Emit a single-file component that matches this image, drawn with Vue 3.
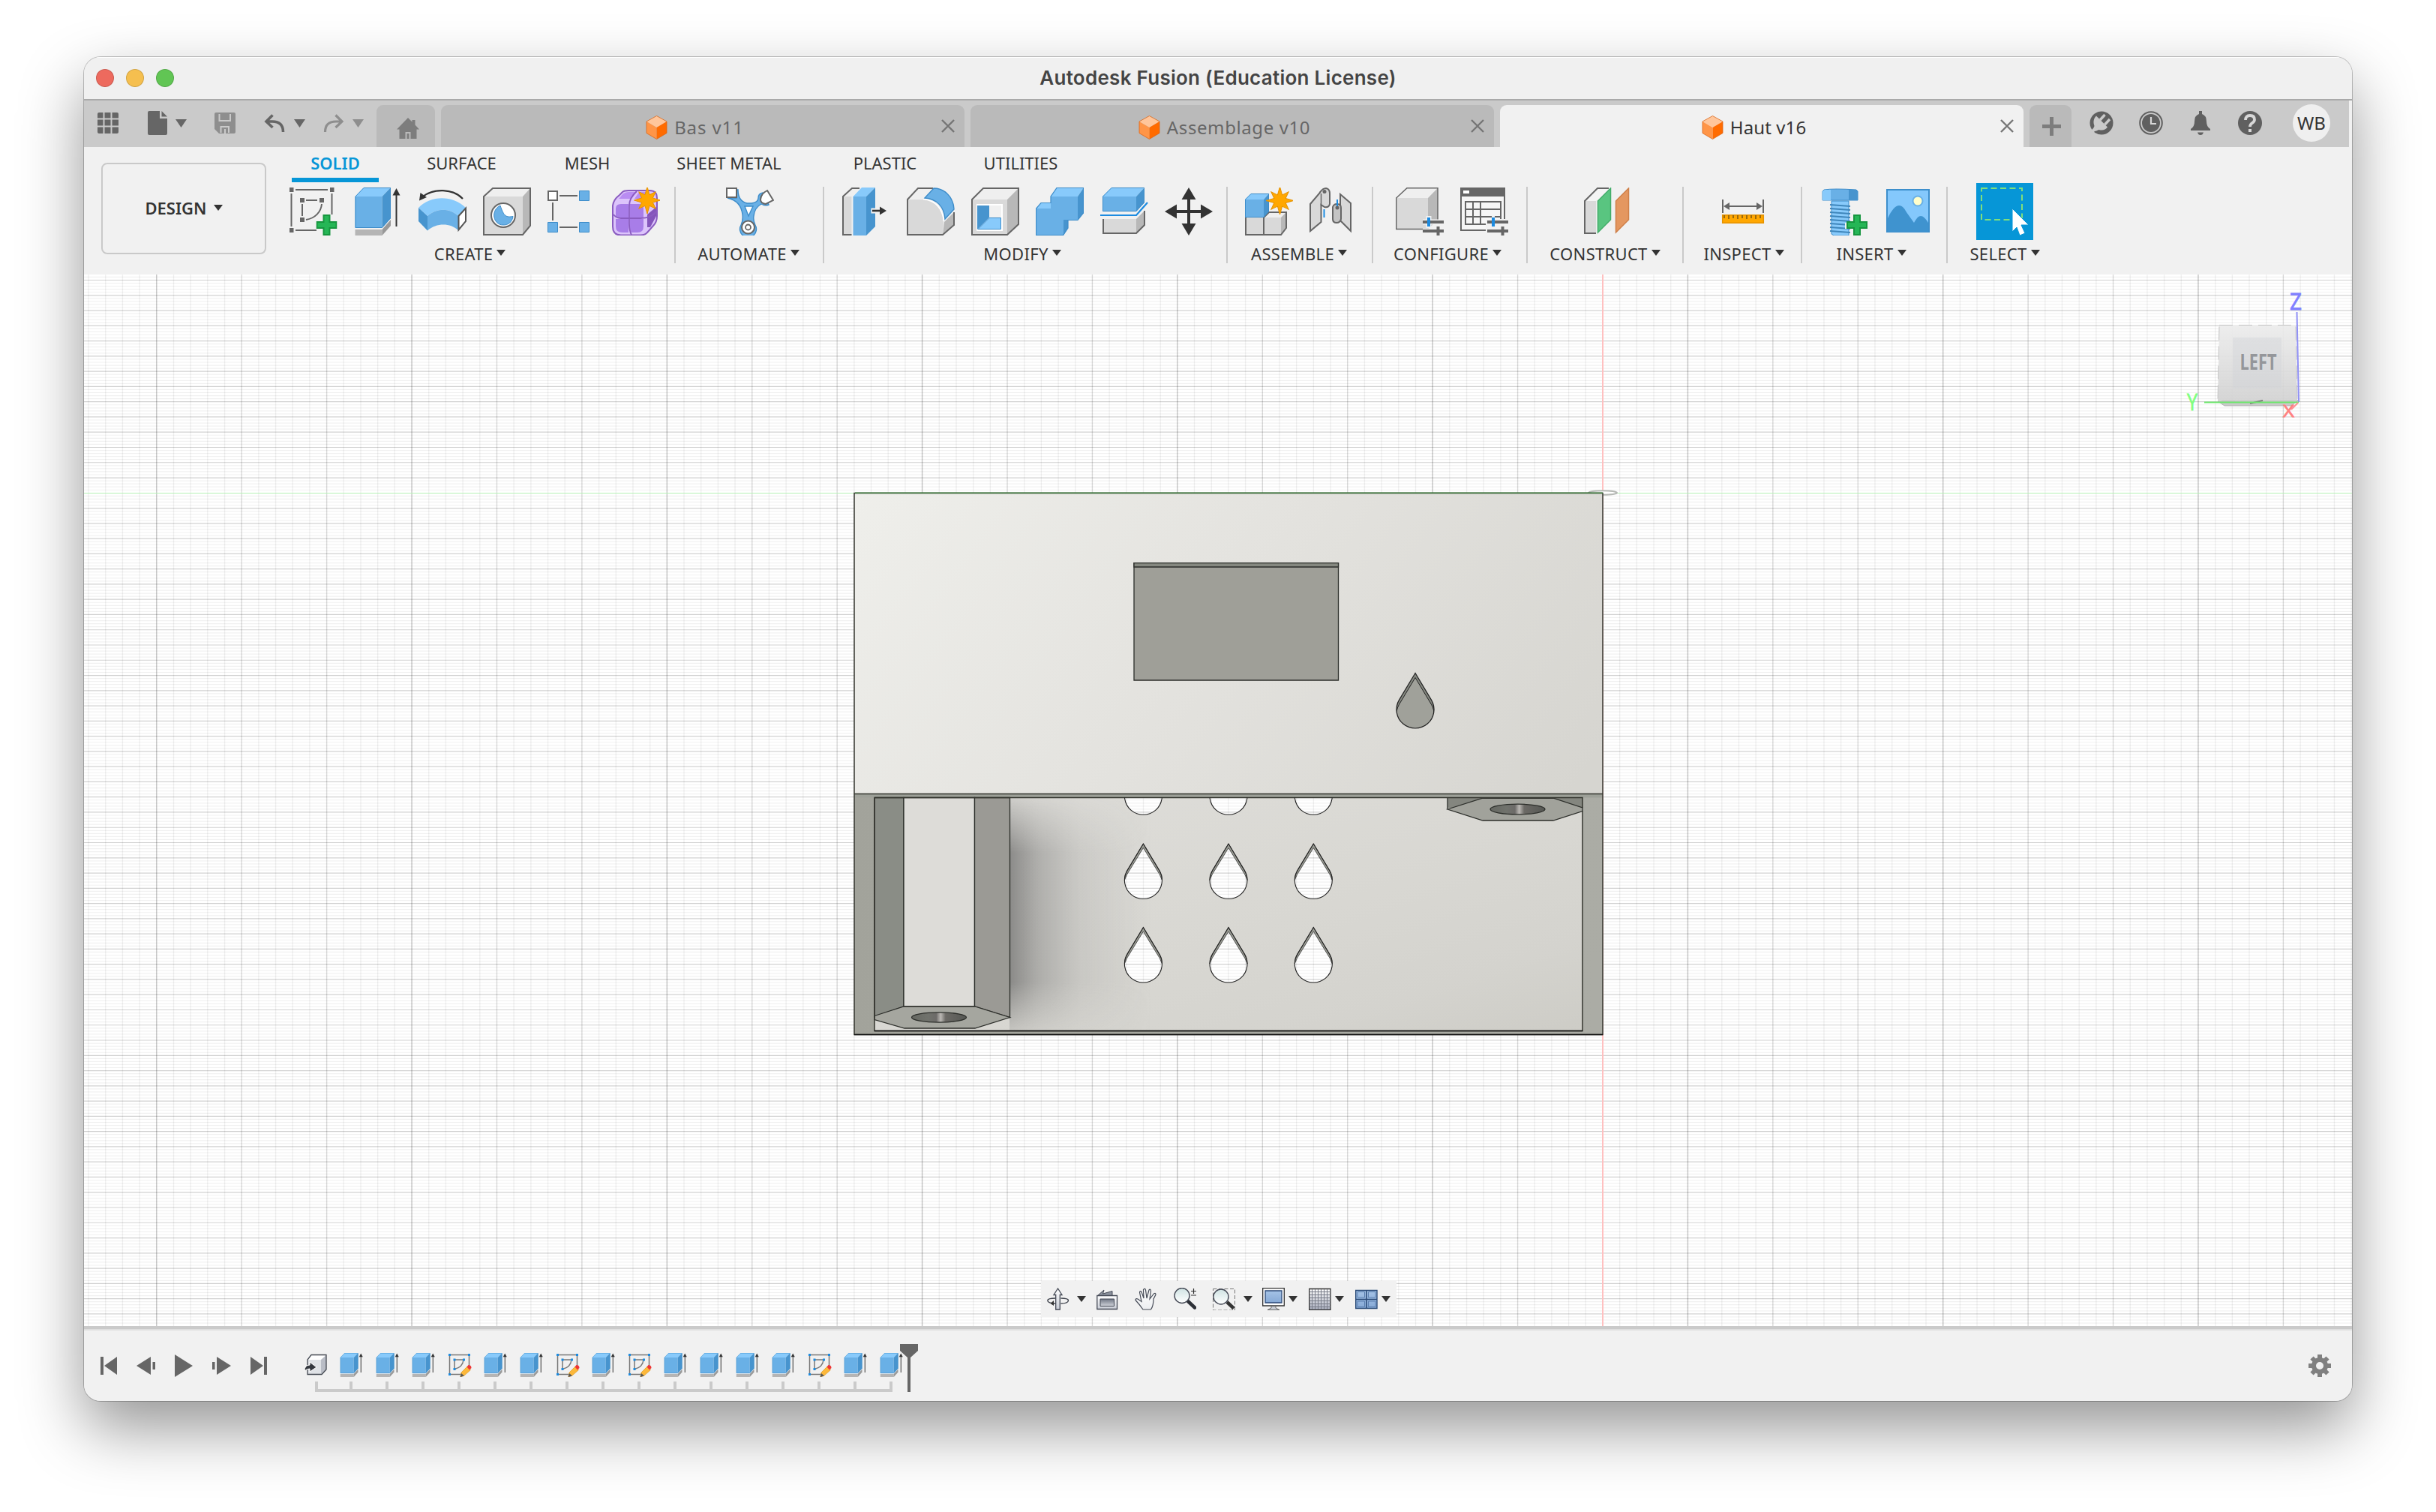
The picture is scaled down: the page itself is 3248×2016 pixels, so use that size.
<script setup>
const docTabs = [
  { name: 'Bas v11', active: false, spacing: '0.9px' },
  { name: 'Assemblage v10', active: false, spacing: '0.6px' },
  { name: 'Haut v16', active: true, spacing: '0.1px' },
]
const ribbonTabs = [
  { name: 'SOLID', width: 116, gap: 43, active: true },
  { name: 'SURFACE', width: 135, gap: 52 },
  { name: 'MESH', width: 96, gap: 49 },
  { name: 'SHEET METAL', width: 184, gap: 53 },
  { name: 'PLASTIC', width: 126, gap: 50 },
  { name: 'UTILITIES', width: 136, gap: 0 },
]
const groups = [
  { name: 'CREATE', icons: ['sketch', 'extrude', 'revolve', 'hole', 'pattern', 'form'], width: 531, shift: -8, nudge: -2 },
  { name: 'AUTOMATE', icons: ['automate'], width: 198, shift: -1, nudge: 1 },
  { name: 'MODIFY', icons: ['presspull', 'fillet', 'shell', 'combine', 'split', 'move'], width: 538, shift: -4, nudge: 3 },
  { name: 'ASSEMBLE', icons: ['component', 'joint'], width: 194, shift: -1, nudge: 2 },
  { name: 'CONFIGURE', icons: ['configure', 'table'], width: 206, shift: -3, nudge: 3 },
  { name: 'CONSTRUCT', icons: ['plane'], width: 208, shift: 0, nudge: 2 },
  { name: 'INSPECT', icons: ['measure'], width: 158, shift: 2, nudge: 1 },
  { name: 'INSERT', icons: ['bolt', 'image'], width: 194, shift: -4, nudge: 5 },
  { name: 'SELECT', icons: ['select'], width: 150, shift: 1, nudge: 1 },
]
const timeline = 'i,e,e,e,s,e,e,s,e,s,e,e,e,e,s,e,e'.split(',').map(
  (k) => ({ i: 'tl-import', e: 'extrude', s: 'tl-sketch' })[k],
)

// Canvas coordinates are relative to the viewport's top left corner (112, 366).
const W = 3024
const H = 1402
const ox = 2025
const oy = 291.3
const vx = []
const hy = []
for (let k = -89; k <= 44; k++) {
  const x = ox + k * 22.685
  const major = k % 5 === 0
  const strong = major && (((k / 5 + 2) % 3) + 3) % 3 === 0
  if (x > 0 && x < W && k !== 0) vx.push({ p: x, o: strong ? 0.23 : major ? 0.15 : 0.06 })
}
for (let k = -71; k <= 275; k++) {
  const y = oy + k * 4.054
  if (y > 0 && y < H && k !== 0) hy.push({ p: y, o: k % 5 === 0 ? 0.18 : 0.055 })
}
const dropXs = [1412.4, 1526, 1639.3]
const drops = dropXs.flatMap((x) => [695.3, 807.5, 919].map((y) => ({ x, y })))
const dropPath = 'M0,-48.5 L-21.4,-12.9 A25,25 0 1 0 21.4,-12.9 Z'
const navItems = [
  { id: 'nav-orbit', arrow: true, w: 30, g: 10, after: 14 },
  { id: 'nav-look', w: 30, after: 21 },
  { id: 'nav-hand', w: 30, after: 22 },
  { id: 'nav-zoom', w: 30, after: 22 },
  { id: 'nav-fit', arrow: true, w: 30, g: 11, after: 13 },
  { id: 'nav-display', arrow: true, w: 30, g: 5, after: 15 },
  { id: 'nav-grid', arrow: true, w: 30, g: 5, after: 15 },
  { id: 'nav-views', arrow: true, w: 30, g: 5, after: 0 },
]
</script>

<template>
  <div class="desktop">
    <svg class="defs" width="0" height="0">
      <defs>
        <linearGradient id="gLens" x1="0" y1="0" x2="0" y2="1"><stop offset="0" stop-color="#cfe3e3" /><stop offset="1" stop-color="#fff" /></linearGradient>
        <linearGradient id="gSteel" x1="0" y1="0" x2="0" y2="1"><stop offset="0" stop-color="#fff" /><stop offset="1" stop-color="#c9cdd6" /></linearGradient>
        <linearGradient id="gHand" x1="0" y1="0" x2="0" y2="1"><stop offset="0" stop-color="#fff" /><stop offset="1" stop-color="#eceef1" /></linearGradient>
        <linearGradient id="gGrid" x1="0" y1="0" x2="0" y2="1"><stop offset="0" stop-color="#fff" /><stop offset="1" stop-color="#a9aebd" /></linearGradient>
        <linearGradient id="gLook" x1="0" y1="0" x2="0" y2="1"><stop offset="0" stop-color="#6f7684" /><stop offset="1" stop-color="#d0d3da" /></linearGradient>
        <linearGradient id="gBlue" x1="0" y1="0" x2="0" y2="1"><stop offset="0" stop-color="#a5c3e6" /><stop offset="1" stop-color="#86a9d6" /></linearGradient>
      </defs>
      <symbol id="star" viewBox="-18 -18 36 36">
        <path d="M0-18 3-7.4 11.3-11.3 7.4-3 17.5 0 7.4 3 11.3 11.3 3 7.4 0 18-3 7.4-11.3 11.3-7.4 3-17.5 0-7.4-3-11.3-11.3-3-7.4Z" fill="#ffa700" stroke="#e59200" stroke-width="1" />
      </symbol>
      <symbol id="plus" viewBox="0 0 28 28">
        <path d="M10 1h8v9h9v8h-9v9h-8v-9H1v-8h9Z" fill="#26b656" stroke="#17963f" stroke-width="2" />
      </symbol>

      <symbol id="sketch" viewBox="0 0 64 64">
        <path d="M8 3h43M2.500 8v44M56.500 8v28M8 57h28M22 17h15M17 22v16M43 22c-1 11-9 19-21 21" fill="none" stroke="#666" stroke-width="2" />
        <path d="M0 0h5.500v6H0ZM54 0h5.500v6H54ZM0 54h5.500v6H0ZM14 14h6v6h-6ZM40 14h6v6h-6ZM14 40h6v6h-6Z" fill="#666" />
        <use href="#plus" x="35.500" y="36" width="28" height="28" />
      </symbol>
      <symbol id="extrude" viewBox="0 0 64 64">
        <path d="M1.500 12h36v42h-36Z" fill="#69b0e6" />
        <path d="M1.500 12 13 0h36L37.500 12Z" fill="#88cafb" />
        <path d="M37.500 12 49 0v41L37.500 54Z" fill="#4794ce" />
        <path d="M2 53.500V12L13 .5h35.500V41L37.500 53.500Z" fill="none" stroke="#3d8cc9" stroke-width="1" />
        <path d="M1.500 56h36v8h-36Z" fill="#b5b5b5" /><path d="M37.500 56 49 43v8L37.500 64Z" fill="#999" />
        <path d="M56.500 6v46" stroke="#333" stroke-width="2" /><path d="m56.500 1 5 9.500h-10Z" fill="#333" />
      </symbol>
      <symbol id="revolve" viewBox="0 0 64 64">
        <path d="M59 15C46 1 20 1 6 12" fill="none" stroke="#333" stroke-width="2.200" /><path d="M1 17.500 2.500 7 11 13Z" fill="#333" />
        <path d="M0 27C16 10 46 10 63 27L53 38C42 27 24 27 12 38Z" fill="#88cafb" />
        <path d="M0 27 12 38V57.500L0 45Z" fill="#4794ce" />
        <path d="M12 38C24 27 42 27 53 38V57C42 47 24 47 12 57.500Z" fill="#69b0e6" />
        <path d="M53.500 38 63 27.500V45L53.500 56.500Z" fill="#fff" stroke="#555" stroke-width="2" />
      </symbol>
      <symbol id="hole" viewBox="0 0 64 64">
        <path d="M1 12 13 1h50L53 12Z" fill="#efefef" /><path d="M1 12h52v51H1Z" fill="#d9d9d9" /><path d="M53 12 63 1v50L53 63Z" fill="#b8b8b8" />
        <path d="M1 63V12L13 1h50v50L53 63Z" fill="none" stroke="#666" stroke-width="2" />
        <circle cx="27" cy="37" r="16" fill="#fff" stroke="#666" stroke-width="2" />
        <path d="M23 24C28 39 31 40 40 38.500 39 46 34 50 27 50 13 50 10 30 23 24Z" fill="#69b0e6" stroke="#3d8cc9" stroke-width="1" />
      </symbol>
      <symbol id="pattern" viewBox="0 0 64 64">
        <path d="M16 11h24M16 53h24M7 20v24" stroke="#666" stroke-width="2" />
        <path d="M1 5h12v12H1Z" fill="#fff" stroke="#666" stroke-width="2" />
        <path d="M42.500 4.500h13v13h-13ZM.5 46.500h13v13H.5ZM42.500 46.500h13v13h-13Z" fill="#69b0e6" stroke="#3d8cc9" stroke-width="1" />
      </symbol>
      <symbol id="form" viewBox="0 0 64 64">
        <path d="M1 24Q2 16 10 10L14 6Q16 4 22 4H50Q60 4 60 14V38Q60 46 55 51L47 60Q44 63.500 38 63.500H12Q1 63.500 1 52Z" fill="#dcc4fb" stroke="#8a5cc0" stroke-width="2" />
        <path d="M11 13Q15 6 22 6H33L26 15H9ZM30 15 36 6H46L43 15Z" fill="#b98cf2" />
        <path d="M5 28Q5 22 12 22H22V40H5ZM24 22H36Q42 22 42 28V40H24ZM5 42H22V60H14Q5 60 5 52ZM24 42H42V52Q42 60 34 60H24Z" fill="#a87de8" />
        <path d="M47 36 59 26V38L51 53H47Z" fill="#8455bb" />
        <path d="M2 36Q6 41 12 41H38Q52 41 59 32M33 5Q23 14 23 24V48Q23 58 26 63" fill="none" stroke="#8a5cc0" stroke-width="1.800" />
        <use href="#star" x="29" y="-1" width="36" height="36" />
      </symbol>
      <symbol id="automate" viewBox="0 0 64 64">
        <path d="M2 14H14V3L16 3Q16 18 28 21H34Q43 20 43 14Q43 8 49 7L57 23Q52 25 47 22Q38 27 37 38Q36 44 39 50A11 11 0 1 1 20 50Q23 44 22 36Q20 18 2 14Z" fill="#69b0e6" stroke="#3d8cc9" stroke-width="1.400" />
        <path d="M25 25H36L30 38Z" fill="#fff" stroke="#3d8cc9" stroke-width="1.400" />
        <path d="M1 1h13v12H1Z" fill="#fff" stroke="#666" stroke-width="2" />
        <path d="M55 4 63 17 53 22Q46 21 46 16 46 9 55 4Z" fill="#fff" stroke="#666" stroke-width="2" />
        <circle cx="29.500" cy="53" r="8.500" fill="#fff" stroke="#666" stroke-width="2" /><circle cx="29.500" cy="53" r="3.500" fill="none" stroke="#666" stroke-width="1.800" />
      </symbol>
      <symbol id="presspull" viewBox="0 0 64 64">
        <path d="M1 12 13 1h10L13 12Z" fill="#efefef" /><path d="M1 12h11.500v51H1Z" fill="#d9d9d9" />
        <path d="M12.500 63H1V12L13 1h10" fill="none" stroke="#666" stroke-width="2" />
        <path d="M14.500 12H32v52H14.500Z" fill="#69b0e6" /><path d="M14.500 12 26 0h18L32 12Z" fill="#88cafb" /><path d="M32 12 44 0v52L32 64Z" fill="#4794ce" />
        <path d="M38.500 27.500H48V22L60 31 48 40V34.500H38.500Z" fill="#f1f1f1" /><path d="M40 31H52" stroke="#333" stroke-width="2.600" /><path d="m59 31-9-5.500v11Z" fill="#333" />
      </symbol>
      <symbol id="fillet" viewBox="0 0 64 64">
        <path d="M1 16 15 1H35L24 15Z" fill="#efefef" /><path d="M1 16H22C38 17 47 28 49 46L48 63H1Z" fill="#d9d9d9" /><path d="M48 63 50 46 63 33V50Z" fill="#b8b8b8" />
        <path d="M35 1H15L1 16V63H48L63 50V33" fill="none" stroke="#666" stroke-width="2" />
        <path d="M24 14C40 15 50 26 51 42L63 29C62 12 50 1 36 1Z" fill="#69b0e6" stroke="#3d8cc9" stroke-width="1.400" />
        <path d="M22 15.500C38 17 48 28 49.500 45" fill="none" stroke="#fff" stroke-width="1.600" />
      </symbol>
      <symbol id="shell" viewBox="0 0 64 64">
        <path d="M1 16 16 1h47L48 16Z" fill="#efefef" /><path d="M1 16h47v47H1Z" fill="#d9d9d9" /><path d="M48 16 63 1v48L48 63Z" fill="#b8b8b8" />
        <path d="M1 63V16L16 1h47v48L48 63Z" fill="none" stroke="#666" stroke-width="2" />
        <path d="M7 22h35v36H7Z" fill="#fff" /><path d="M8 24h16v16L8 56Z" fill="#4794ce" /><path d="M24 24h16v16H24Z" fill="#f1f1f1" /><path d="M24 40.500h15.500v15H9Z" fill="#88cafb" stroke="#3d8cc9" stroke-width="1" />
      </symbol>
      <symbol id="combine" viewBox="0 0 64 64">
        <path d="M0 28H20V12H56V43H37V64H0Z" fill="#69b0e6" /><path d="M0 28 7 20.500H20V28ZM20 12 28 0H64L56 12Z" fill="#88cafb" /><path d="M56 12 64 0V34L56 43ZM37 43H43V54L37 64Z" fill="#4794ce" />
        <path d="M.5 63.500V28L7 20.500H20V12L28 .5H63.500V34L56 43.500H43V54L36.500 63.500Z" fill="none" stroke="#3d8cc9" stroke-width="1.200" />
      </symbol>
      <symbol id="split" viewBox="0 0 64 64">
        <path d="M3 12H48V32H3Z" fill="#69b0e6" /><path d="M3 12 15 0H59L48 12Z" fill="#88cafb" /><path d="M48 12 59 0V20L48 32Z" fill="#4794ce" />
        <path d="M3.500 31.500V12L15 .5H58.500V20L48 31.500Z" fill="none" stroke="#3d8cc9" stroke-width="1" />
        <path d="M0 37H48L63 20" fill="none" stroke="#1c8be0" stroke-width="2.200" />
        <path d="M4 42H48V61H4Z" fill="#d9d9d9" /><path d="M48 42 59 31V50L48 61Z" fill="#b8b8b8" /><path d="M4 42V61H48L59 50V31" fill="none" stroke="#666" stroke-width="2" />
      </symbol>
      <symbol id="move" viewBox="0 0 64 64">
        <path d="M32 12V52M12 32H52" stroke="#333" stroke-width="4" /><path d="m32 0 9.500 16h-19ZM32 64l9.500-16h-19ZM0 32l16-9.500v19ZM64 32 48 22.500v19Z" fill="#333" />
      </symbol>
      <symbol id="component" viewBox="0 0 64 64">
        <path d="M1 40H48V63H1Z" fill="#d9d9d9" /><path d="M25 40 32 33H55L48 40Z" fill="#efefef" /><path d="M48 40 55 33V54L48 63Z" fill="#b8b8b8" />
        <path d="M1 40V63H48L55 54V33H32L25 40V63" fill="none" stroke="#666" stroke-width="2" />
        <path d="M0 16H25V40H0Z" fill="#69b0e6" /><path d="M0 16 8 8H32L25 16Z" fill="#88cafb" /><path d="M25 16 32 8V32L25 40Z" fill="#4794ce" /><path d="M.5 39.500V16L8 8.500H31.500V32L25 39.500Z" fill="none" stroke="#3d8cc9" stroke-width="1" />
        <circle cx="46" cy="17" r="12" fill="#f1f1f1" />
        <use href="#star" x="28" y="-1" width="37" height="37" />
      </symbol>
      <symbol id="joint" viewBox="0 0 64 64">
        <path d="M1 22 13 8Q17 1 22 1 27 2 27 8V22Q26 27 20 26L15.500 23V46L1 58Z" fill="#d9d9d9" stroke="#666" stroke-width="2" /><path d="M15.500 8V24" stroke="#666" stroke-width="1.500" />
        <circle cx="20" cy="5.500" r="2.500" fill="#666" /><path d="M19.500 29V40" stroke="#1c8be0" stroke-width="2" />
        <path d="M41 9 55 21V58L41 44Z" fill="#d9d9d9" stroke="#666" stroke-width="2" />
        <path d="M31 26Q32 22 37 22 42 22 42 27V42Q41 47 36 47 31 47 31 42Z" fill="#c4c4c4" stroke="#666" stroke-width="2" /><path d="M37 16V25" stroke="#1c8be0" stroke-width="2" /><circle cx="37" cy="27" r="2.500" fill="#666" />
      </symbol>
      <symbol id="sliders" viewBox="0 0 64 64">
        <path d="M34 43H42V38H46V42H64V64H34Z" fill="#f1f1f1" /><path d="M36 46H64M36 58H64" stroke="#666" stroke-width="4" /><path d="M44 40V52" stroke="#1c8be0" stroke-width="4" /><path d="M56.500 52V64" stroke="#666" stroke-width="4" />
      </symbol>
      <symbol id="configure" viewBox="0 0 64 64">
        <path d="M.7 14 15 .7H56L43 14Z" fill="#efefef" /><path d="M.7 14H43V55.500H.7Z" fill="#d9d9d9" /><path d="M43 14 56 .7V43L43 55.500Z" fill="#b8b8b8" />
        <path d="M43 55.500H.7V14L15 .7H56V43" fill="none" stroke="#666" stroke-width="1.500" />
        <path d="M36 46H64M36 58H64" stroke="#f1f1f1" stroke-width="7" /><path d="M44 38V54" stroke="#f1f1f1" stroke-width="7" />
        <path d="M36 46H64M36 58H64" stroke="#666" stroke-width="4" /><path d="M44 40V52" stroke="#1c8be0" stroke-width="4" /><path d="M56.500 52V64" stroke="#666" stroke-width="4" />
      </symbol>
      <symbol id="table" viewBox="0 0 64 64">
        <path d="M1 1H59V57H1Z" fill="#f6f6f6" stroke="#666" stroke-width="2" /><path d="M0 0H60V12H0Z" fill="#666" /><path d="M4 4H12V8H4Z" fill="#fff" />
        <path d="M7 19H54V49H7ZM7 29H54M7 39H54M17 19V49M27 19V49" fill="none" stroke="#666" stroke-width="2" />
        <use href="#sliders" />
      </symbol>
      <symbol id="plane" viewBox="0 0 64 64">
        <path d="M3 18 20 1H36L18 18Z" fill="#f4f4f4" /><path d="M3 18H18V61H3Z" fill="#d9d9d9" /><path d="M18 61H3V18L20 1H35" fill="none" stroke="#666" stroke-width="2" />
        <path d="M20.500 18 37.500 1V43L20.500 60Z" fill="#59c580" stroke="#43ad6a" stroke-width="1.500" /><path d="M44.500 18 61.500 1V43L44.500 60Z" fill="#e49760" stroke="#cf8049" stroke-width="1.500" />
      </symbol>
      <symbol id="measure" viewBox="0 0 64 64">
        <path d="M5 16V34M59 16V34M10 25H54" stroke="#666" stroke-width="2" /><path d="m6 25 8-5v10ZM58 25l-8-5v10Z" fill="#666" />
        <path d="M4.700 36.700H59.300V47.300H4.700Z" fill="#ffa700" stroke="#e59200" stroke-width="1.500" /><path d="M7 37v4M13 37v5M19 37v4M25 37v5M31 37v4M37 37v5M43 37v4M49 37v5M55 37v4" stroke="#7a5510" stroke-width="1.500" />
      </symbol>
      <symbol id="bolt" viewBox="0 0 64 64">
        <path d="M3 3Q16 1 46 3L48 5V17H1V5Z" fill="#69b0e6" stroke="#3d8cc9" stroke-width="1" /><path d="M1 5 4 3H12V17H1Z" fill="#88cafb" /><path d="M36 3H46L48 5V17H36Z" fill="#4794ce" />
        <path d="M13 18H36V64L32 64H16L13 62Z" fill="#88cafb" stroke="#3d8cc9" stroke-width="1" />
        <path d="M11 23 38 25M11 28 38 30M11 33 38 35M11 38 38 40M11 43 38 45M11 48 38 50M11 53 38 55M11 58 38 60" stroke="#3f86bb" stroke-width="2" />
        <path d="M31 47H43V35H64V64H41V55H31Z" fill="#f1f1f1" /><use href="#plus" x="33" y="36" width="28" height="28" />
      </symbol>
      <symbol id="image" viewBox="0 0 64 64">
        <path d="M1 3H57V59H1Z" fill="#84c8fc" stroke="#3d8fcc" stroke-width="2" /><path d="M2 41C12 20 20 20 27 33L37 47C43 36 48 34 56 47V59H2Z" fill="#3f93cf" />
        <circle cx="42" cy="18" r="6.500" fill="#ffffcb" stroke="#69b0e6" stroke-width="2" />
      </symbol>
      <symbol id="select" viewBox="0 0 76 76">
        <path d="M0 0H76V76H0Z" fill="#0696d7" /><path d="M7 7H61V49H7Z" fill="none" stroke="#7fdf7c" stroke-width="2" stroke-dasharray="8 4.500" />
        <path d="M48 34V65L54 59 58 70 65 67 60 56H70Z" fill="#fff" stroke="#0696d7" stroke-width="1" />
      </symbol>
      <symbol id="cube" viewBox="0 0 28 32">
        <path d="M14 .5 27.500 8 14 16 .5 8Z" fill="#ffc69b" /><path d="M.5 8 14 16V31.500L.5 23.500Z" fill="#ff9547" /><path d="M14 16 27.500 8V23.500L14 31.500Z" fill="#ff6b00" /><path d="M14 .5 27.500 8V23.500L14 31.500.5 23.500V8Z" fill="none" stroke="#d9661b" stroke-width=".8" />
      </symbol>

      <symbol id="tl-import" viewBox="0 0 32 32">
        <path d="M5 9 10 3H29L23 9Z" fill="#fff" /><path d="M5 9H23V28H5Z" fill="#dfe2e6" /><path d="M23 9 30 3V23L23 28Z" fill="#b9bdc6" /><path d="M5 28V9L10 2.500H30V22L24 28.500H5Z" fill="none" stroke="#444952" stroke-width="1.300" />
        <path d="M1 24Q1 16 8 16V12L17 19 8 25V21Q4 21 1 24Z" fill="#33373e" stroke="#fff" stroke-width="1" />
      </symbol>
      <symbol id="tl-sketch" viewBox="0 0 32 32">
        <path d="M2.500 2.500H28.500V20M2.500 2.500V28.500H17M9 9H21Q20 19 9 21.500Z" fill="none" stroke="#777" stroke-width="1.500" />
        <path d="M1 1h3v3H1ZM27 1h3v3h-3ZM1 27h3v3H1ZM7.500 7.500h3v3h-3ZM20 7.500h3v3h-3ZM7.500 20h3v3h-3Z" fill="#1c8be0" />
        <path d="M18 26 26 18 30.500 22.500 22 30 17 32Z" fill="#fcb83a" stroke="#e09a20" stroke-width=".7" /><path d="m25.500 18.500 2-2.500q4 0 4 4l-2.500 2.500Z" fill="#ef3434" /><path d="m16.500 32 1.500-5 4 3.500Z" fill="#555" />
      </symbol>

      <symbol id="nav-orbit" viewBox="0 0 30 30">
        <path d="M11 14Q1 14 .8 17 .8 20.500 11 21M18.500 14Q28.500 14 28.500 17 28 21 18.500 21" fill="none" stroke="#3d414b" stroke-width="1.400" /><path d="M4.500 21 9 17v7Z" fill="#333" />
        <path d="M11.700 29V9.500H9L14.500 1 20 9.500H17.300V29Z" fill="url(#gSteel)" stroke="#454a56" stroke-width="1.300" />
      </symbol>
      <symbol id="nav-look" viewBox="0 0 30 30">
        <path d="M2 10 10 3 8.500 8 21 4.500V11" fill="#8b919d" stroke="#454a56" /><path d="M.8 10.500H27.500V28.500H.8Z" fill="url(#gSteel)" stroke="#454a56" stroke-width="1.300" /><path d="M5 15H23.500V24.500H5Z" fill="url(#gLook)" stroke="#454a56" />
      </symbol>
      <symbol id="nav-hand" viewBox="0 0 30 30">
        <path d="M11 29Q7 23 1 16.500 1 14 4 15L9 18.500 6.500 6Q7 3.500 9 5.500L12 14 11.500 2.500Q14 0 14.500 3L16 14 19 3Q21 1 21.500 4L20 15 25.500 8Q28 6.500 28 9L25 15Q25 24 21.500 29Z" fill="url(#gHand)" stroke="#454a56" stroke-width="1.200" />
      </symbol>
      <symbol id="nav-zoom" viewBox="0 0 30 30">
        <path d="m19 18 9 8.500" stroke="#2d3037" stroke-width="4.500" stroke-linecap="round" /><circle cx="11" cy="10.500" r="10" fill="url(#gLens)" stroke="#454a56" stroke-width="1.400" /><path d="M23 4.500h7M26.500 1v7M23 10h7" stroke="#333" stroke-width="1.200" />
      </symbol>
      <symbol id="nav-fit" viewBox="0 0 30 30">
        <path d="M.5 1.500H29.500V30H.5Z" fill="none" stroke="#777" stroke-dasharray="5 2.500" /><path d="m19 19 9 8.500" stroke="#333" stroke-width="4.500" /><circle cx="11" cy="12" r="10" fill="url(#gLens)" stroke="#454a56" stroke-width="1.400" />
      </symbol>
      <symbol id="nav-display" viewBox="0 0 30 30">
        <path d="M.7.700H29.300V24H.7Z" fill="#fff" stroke="#333" stroke-width="1.300" /><path d="M4 4H26V20H4Z" fill="url(#gBlue)" stroke="#2d4a78" stroke-width="1.300" /><path d="M12 24.500H18V27L23 29.500H7L12 27Z" fill="#c9cdd6" stroke="#555" stroke-width=".8" />
      </symbol>
      <symbol id="nav-grid" viewBox="0 0 30 30">
        <path d="M.7 1.500H29V29.500H.7Z" fill="url(#gGrid)" stroke="#333" stroke-width="1.300" /><path d="M4.500 2v27M8.500 2v27M12.500 2v27M16.500 2v27M20.500 2v27M24.500 2v27M1 5.500h28M1 9.500h28M1 13.500h28M1 17.500h28M1 21.500h28M1 25.500h28" stroke="#777b88" stroke-width="1" />
      </symbol>
      <symbol id="nav-views" viewBox="0 0 30 30">
        <path d="M.7 3.500H29V27.500H.7Z" fill="url(#gBlue)" stroke="#2b4b78" stroke-width="1.400" /><path d="M15 3.500v24M1 15.500h28" stroke="#2b4b78" stroke-width="1.600" /><path d="M3 5.500H12.500V13H3ZM17.500 5.500H27V13H17.500ZM3 18H12.500V25.500H3ZM17.500 18H27V25.500H17.500Z" fill="none" stroke="#5b7fb0" />
      </symbol>
    </svg>

    <div class="window">
      <header class="titlebar">
        <div class="lights"><i class="red"></i><i class="yellow"></i><i class="green"></i></div>
        <span class="title">Autodesk Fusion (Education License)</span>
      </header>

      <div class="tabbar">
        <div class="quick">
          <svg class="q-grid" width="28" height="28" viewBox="0 0 28 28"><rect width="28" height="28" rx="2" fill="#666" /><path d="M8.500 0v28M18.500 0v28M0 8.500h28M0 18.500h28" stroke="#cacaca" stroke-width="2" /></svg>
          <svg class="q-doc" width="26" height="32" viewBox="0 0 26 32"><path d="M2 0H16V10H26V30Q26 32 24 32H2Q0 32 0 30V2Q0 0 2 0Z" fill="#666" /><path d="M18.500 0 26 7.500H18.500Z" fill="#666" /></svg>
          <svg class="q-a1" width="15" height="11"><path d="M0 0H15L7.500 11Z" fill="#666" /></svg>
          <svg class="q-save" width="28" height="28" viewBox="0 0 28 28"><path d="M2 0H26Q28 0 28 2V26Q28 28 26 28H6L0 22V2Q0 0 2 0Z" fill="#8e8e8e" /><path d="M6.500 2V11H21V2M8.500 27V19H19V27M14 22V28" fill="none" stroke="#cacaca" stroke-width="2" /></svg>
          <svg class="q-undo" width="26" height="25" viewBox="0 0 26 25"><path d="M10.500 1.500 2 10 10.500 18M2.500 10H10Q24.500 10 24.500 24" fill="none" stroke="#666" stroke-width="3.600" /></svg>
          <svg class="q-a2" width="15" height="11"><path d="M0 0H15L7.500 11Z" fill="#666" /></svg>
          <svg class="q-redo" width="26" height="25" viewBox="0 0 26 25"><path d="M15.500 1.500 24 10 15.500 18M23.500 10H16Q1.500 10 1.500 24" fill="none" stroke="#8e8e8e" stroke-width="3.200" /></svg>
          <svg class="q-a3" width="15" height="11"><path d="M0 0H15L7.500 11Z" fill="#8e8e8e" /></svg>
        </div>
        <div class="tab home">
          <svg width="30" height="28" viewBox="0 0 30 28"><path d="M15 0 20.500 5.500V3H24.500V9.500L30 15.500H26.500V28H18.500V19H11.500V28H3.500V15.500H0Z" fill="#7d7d7d" /><path d="M13.500 21H16.500V28H13.500Z" fill="#7d7d7d" /></svg>
        </div>
        <div v-for="t in docTabs" :key="t.name" class="tab doc" :class="{ active: t.active }">
          <div class="doc-label"><svg width="29" height="32"><use href="#cube" /></svg><span :style="{ letterSpacing: t.spacing }">{{ t.name }}</span></div>
          <svg class="close" width="18" height="18" viewBox="0 0 18 18"><path d="m1 1 16 16M17 1 1 17" stroke="currentColor" stroke-width="2.400" /></svg>
        </div>
        <div class="tab add"><svg width="25" height="25"><path d="M12.500 0V25M0 12.500H25" stroke="#7d7d7d" stroke-width="5" /></svg></div>
        <div class="status">
          <svg width="32" height="32" viewBox="0 0 32 32"><circle cx="16" cy="16" r="15.500" fill="#606060" /><path d="M9 6.500 24 21.500Q20 27 12.500 25L8 27 5 24 6.500 20Q3.500 12 9 6.500Z" fill="#cacaca" /><path d="m14 12 6.500-7M20.500 18 27 11" stroke="#cacaca" stroke-width="3.400" /><path d="M8 23 2 29" stroke="#cacaca" stroke-width="4" /></svg>
          <svg width="32" height="32" viewBox="0 0 32 32"><circle cx="16" cy="16" r="14.800" fill="none" stroke="#606060" stroke-width="2" /><circle cx="16" cy="16" r="12" fill="#606060" /><path d="M16 8V17H23" fill="none" stroke="#d8d8d8" stroke-width="2.200" /></svg>
          <svg width="32" height="32" viewBox="0 0 32 32"><path d="M14 0H18V4Q24 6 24 14 24 21 29 24V26H3V24Q8 21 8 14 8 6 14 4ZM12 28.500H20Q19 32 16 32 13 32 12 28.500Z" fill="#606060" /></svg>
          <svg width="32" height="32" viewBox="0 0 32 32"><circle cx="16" cy="16" r="16" fill="#606060" /><path d="M10 12Q10 6 16 6 22 6 22 11.500 22 14 19 16 16 18 16 21" fill="none" stroke="#d8d8d8" stroke-width="3.800" /><path d="M14 24H18V28H14Z" fill="#d8d8d8" /></svg>
          <span class="avatar">WB</span>
        </div>
      </div>

      <section class="ribbon">
        <button class="design">DESIGN<i></i></button>
        <div class="ribbon-main">
          <nav class="ribbon-tabs">
            <span v-for="t in ribbonTabs" :key="t.name" :class="{ on: t.active }" :style="{ width: t.width + 'px', marginRight: t.gap + 'px' }">{{ t.name }}</span>
          </nav>
          <div class="groups">
            <div v-for="g in groups" :key="g.name" class="group" :class="g.name.toLowerCase()" :style="{ width: g.width + 'px' }">
              <div class="icons" :style="{ marginLeft: g.nudge * 2 + 'px' }"><svg v-for="i in g.icons" :key="i" class="tool" :class="i"><use :href="'#' + i" /></svg></div>
              <div class="label" :style="{ marginLeft: g.shift * 2 + 'px' }">{{ g.name }}<i></i></div>
            </div>
          </div>
        </div>
      </section>

      <main class="viewport">
        <svg class="scene" :width="W" :height="H" :viewBox="`0 0 ${W} ${H}`">
          <defs>
            <linearGradient id="face" gradientUnits="userSpaceOnUse" x1="1080" y1="200" x2="1900" y2="800"><stop offset="0" stop-color="#efefeb" /><stop offset=".5" stop-color="#e3e2de" /><stop offset="1" stop-color="#d6d5d0" /></linearGradient>
            <linearGradient id="inner" x1="0" y1="0" x2="1" y2="1"><stop offset="0" stop-color="#dfdeda" /><stop offset=".55" stop-color="#d8d7d2" /><stop offset=".8" stop-color="#d4d3ce" /><stop offset="1" stop-color="#cdccc6" /></linearGradient>
            <linearGradient id="shade" x1="0" y1="0" x2="1" y2="0"><stop offset="0" stop-color="#505050" stop-opacity=".58" /><stop offset=".2" stop-color="#606060" stop-opacity=".36" /><stop offset=".5" stop-color="#777" stop-opacity=".16" /><stop offset="1" stop-color="#888" stop-opacity="0" /></linearGradient>
            <linearGradient id="fade" x1="0" y1="0" x2="0" y2="1"><stop offset="0" stop-color="#fff" stop-opacity=".1" /><stop offset=".25" stop-color="#fff" /><stop offset=".78" stop-color="#fff" /><stop offset="1" stop-color="#fff" stop-opacity=".15" /></linearGradient>
            <linearGradient id="rim" x1="0" y1="0" x2="1" y2="0"><stop offset="0" stop-color="#a2a39b" /><stop offset="1" stop-color="#abaca5" /></linearGradient>
            <linearGradient id="bore"><stop offset="0" stop-color="#666862" /><stop offset=".3" stop-color="#70726c" /><stop offset=".45" stop-color="#6c6a68" /><stop offset=".53" stop-color="#bcb9b5" /><stop offset=".62" stop-color="#6b6965" /><stop offset="1" stop-color="#555753" /></linearGradient>
            <linearGradient id="cubeFace" x1="0" y1="0" x2="0" y2="1"><stop offset="0" stop-color="#ececec" /><stop offset="1" stop-color="#d2d2d2" /></linearGradient>
            <mask id="cut"><rect :width="W" :height="H" fill="#fff" /><path v-for="(d, i) in drops" :key="i" :d="dropPath" :transform="`translate(${d.x},${d.y})`" fill="#000" /><path d="M1020 640H2010V697.500H1020Z" fill="#fff" /></mask>
            <mask id="fadeMask"><rect x="1200" y="690" width="240" height="325" fill="url(#fade)" /></mask>
            <clipPath id="open"><path d="M1054 697.600H1998V1008.500H1054Z" /></clipPath>
            <clipPath id="dropClip"><path :d="dropPath" /></clipPath>
          </defs>
          <rect :width="W" :height="H" fill="#fff" />
          <g stroke="#000">
            <line v-for="l in hy" :key="'h' + l.p" x1="0" :x2="W" :y1="l.p" :y2="l.p" stroke-width="1.200" :stroke-opacity="l.o" />
            <line v-for="l in vx" :key="'v' + l.p" y1="0" :y2="H" :x1="l.p" :x2="l.p" stroke-width="1.400" :stroke-opacity="l.o" />
          </g>
          <path d="M2025 0V1402" stroke="#ffc0c0" stroke-width="2" /><path d="M0 291.500H3024" stroke="#b4f0b4" stroke-width="1.200" />
          <ellipse cx="2025" cy="291" rx="19" ry="2.800" fill="#fff" stroke="#b5b8b4" stroke-width="2" />
          <g mask="url(#cut)">
            <path d="M1027 291.500H2025V1013.500H1027Z" fill="url(#rim)" />
            <path d="M1054 697.500H1998V1008.500H1054Z" fill="url(#inner)" />
            <rect x="1234" y="698" width="190" height="310" fill="url(#shade)" mask="url(#fadeMask)" />
          </g>
          <path d="M1027 291.500H2025V692.500H1027Z" fill="url(#face)" />
          <path d="M1027 692.500H2025V697.500H1027Z" fill="#9da098" />
          <g stroke="#2c2e2a" stroke-width="1.300" fill="none">
            <path d="M1054 697.500H1093V976L1054 990Z" fill="#8a8d86" /><path d="M1093 697.500H1187.500V976H1093Z" fill="#dddcd8" /><path d="M1187.500 697.500H1234.500V990.500L1187.500 976Z" fill="#9b9a95" />
            <path d="M1054 988.500 1093 976H1188L1234.500 990.500 1188 1005H1094L1054 993.500Z" fill="#a5a69f" /><ellipse cx="1140" cy="990.500" rx="36.500" ry="6.600" fill="url(#bore)" />
            <path d="M1818 697.500H1998V711H1818Z" fill="#84867f" stroke="none" /><path d="M1818 697.500V713" />
            <path d="M1818 713 1864 698.300H1960L1998 711V715.500L1959 728H1865Z" fill="#a1a29b" /><ellipse cx="1911.500" cy="713" rx="36.500" ry="6.800" fill="url(#bore)" />
            <path d="M1027 291.500H2025V1013.500H1027ZM1027 692.500H2025M1054 697.500H1998V711M1998 715.500V1008.500H1054V697.500" stroke="#34362f" stroke-width="1.500" />
            <path d="M1027 1013.500H2025M1054 1008.500H1998" stroke="#111" stroke-width="1.400" />
            <path d="M1400 384.700H1672.500V541H1400Z" fill="#9f9f98" /><path d="M1400 384.700H1672.500V390H1400Z" fill="#858880" />
          </g>
          <path d="M1028 291.300H2025" stroke="#3b7a3b" stroke-width="1.500" />
          <g transform="translate(1775,580)"><path :d="dropPath" fill="#858880" /><g clip-path="url(#dropClip)"><path :d="dropPath" transform="translate(0,6)" fill="#a0a19a" stroke="#222" /></g><path :d="dropPath" fill="none" stroke="#222" stroke-width="1.200" /></g>
          <g clip-path="url(#open)" fill="none" stroke="#222" stroke-width="1.100">
            <g v-for="(d, i) in drops" :key="i" :transform="`translate(${d.x},${d.y})`">
              <path d="M0-48.500-21.400-12.900Q-25-7-25 0L-21.800-7.500 0-43 21.800-7.500 25 0Q25-7 21.400-12.900Z" fill="#9a9c94" stroke-width=".7" /><path :d="dropPath" />
            </g>
          </g>
          <g>
            <path d="M2845 169 2854 175H2943L2952 168Z" fill="#c9c9c9" stroke="#b0b0b0" />
            <path d="M2847 67.500H2949L2951 168.500H2845Z" fill="url(#cubeFace)" fill-opacity=".93" stroke="#c4c4c4" stroke-dasharray="18 8" />
            <path d="M2865 84H2930V152H2865Z" fill="#cfd2d6" opacity=".4" />
            <path d="M2888 172 2905 168" stroke="#777" stroke-width="2" />
            <path d="M2950.500 50 2953 170" stroke="#9090f5" stroke-width="2" /><path d="M2827 170.500H2953" stroke="#6ee66e" stroke-width="2" /><path d="M2952 171 2943 180" stroke="#ff9090" stroke-width="2" />
            <text x="2899" y="127" class="cube-text" text-anchor="middle" textLength="49" lengthAdjust="spacingAndGlyphs">LEFT</text>
            <text x="2949" y="46.500" class="axis" fill="#8080ff" stroke="#8080ff" textLength="16" lengthAdjust="spacingAndGlyphs" text-anchor="middle">Z</text>
            <text x="2811" y="180.500" class="axis" fill="#80ff80" stroke="#80ff80" textLength="14" lengthAdjust="spacingAndGlyphs" text-anchor="middle">Y</text>
            <text x="2939.500" y="189.500" class="axis small" fill="#ff8080" stroke="#ff8080" text-anchor="middle" textLength="15" lengthAdjust="spacingAndGlyphs">X</text>
          </g>
        </svg>
        <div class="navbar">
          <template v-for="n in navItems" :key="n.id">
            <svg class="nav" width="30" height="30" :style="{ marginRight: (n.arrow ? n.g : n.after) + 'px' }"><use :href="'#' + n.id" /></svg>
            <svg v-if="n.arrow" class="nav" width="12" height="8" :style="{ marginRight: n.after + 'px' }"><path d="M0 0H12L6 8Z" fill="#333" /></svg>
          </template>
        </div>
      </main>

      <footer class="timeline">
        <div class="player">
          <svg width="22" height="26"><path d="M0 1H4V25H0ZM22 1V25L5 13Z" fill="#666" /></svg>
          <svg width="25" height="26"><path d="M19 1V25L0 13ZM21.500 8H25V18H21.500Z" fill="#666" /></svg>
          <svg width="24" height="30"><path d="M0 0 24 15 0 30Z" fill="#666" /></svg>
          <svg width="25" height="26"><path d="M6 1V25L25 13ZM0 8H3.500V18H0Z" fill="#666" /></svg>
          <svg width="22" height="26"><path d="M0 1V25L17 13ZM18 1H22V25H18Z" fill="#666" /></svg>
        </div>
        <div class="history">
          <div v-for="(f, i) in timeline" :key="i" class="feature"><svg width="32" height="32"><use :href="'#' + f" /></svg><i></i></div>
          <svg class="marker" width="24" height="64"><path d="M0 0H24V9L14 18V64H10V18L0 9Z" fill="#666" /></svg>
        </div>
        <svg class="gear" width="30" height="30" viewBox="-15 -15 30 30"><circle r="8" fill="none" stroke="#808080" stroke-width="6" /><path d="M0-15V-9M0 15V9M-15 0H-9M15 0H9M-10.500-10.500-6-6M10.500-10.500 6-6M-10.500 10.500-6 6M10.500 10.500 6 6" stroke="#808080" stroke-width="6" /></svg>
      </footer>
    </div>
  </div>
</template>

<style>
body { margin: 0; background: #fff; }
</style>

<style scoped>
.desktop { width: 3248px; height: 2016px; box-sizing: border-box; padding: 76px 112px; background: #fff; overflow: hidden; font-family: "Noto Sans", "Open Sans", sans-serif; color: #333; }
.defs { position: absolute; }
svg { display: block; flex: none; overflow: visible; }
.window { width: 3024px; height: 1792px; border-radius: 22px; overflow: hidden; background: #f1f1f1; display: flex; flex-direction: column; box-shadow: 0 0 0 1px rgba(0, 0, 0, .22), 0 36px 84px rgba(0, 0, 0, .42); }
.titlebar { height: 58px; box-sizing: border-box; background: #f0f0f0; border-top: 1px solid #fff; border-bottom: 2px solid #a9a9a9; display: grid; grid-template-columns: 200px 1fr 200px; align-items: center; flex: none; }
.lights { display: flex; gap: 16px; padding: 0 0 1px 16px; }
.lights i { width: 24px; height: 24px; border-radius: 50%; box-sizing: border-box; border: 1px solid rgba(0, 0, 0, .14); }
.red { background: #ed6a5e; } .yellow { background: #f5bf4f; } .green { background: #61c554; }
.title { text-align: center; font: 600 26px Inter, sans-serif; color: #444; padding-bottom: 3px; letter-spacing: 0.27px; }
.tabbar { height: 62px; margin-right: 4px; background: #cacaca; display: flex; gap: 8px; align-items: flex-end; flex: none; }
.quick { width: 382px; height: 62px; display: flex; align-items: center; flex: none; }
.quick svg { position: relative; top: -1px; }
.q-grid { margin-left: 18px; } .q-doc { margin-left: 39px; } .q-a1 { margin-left: 11px; } .q-save { margin-left: 37px; }
.q-undo { margin-left: 39px; } .q-a2 { margin-left: 13px; } .q-redo { margin-left: 25px; } .q-a3 { margin-left: 12px; }
.tab { height: 56px; border-radius: 9px 9px 0 0; background: #bababa; display: flex; align-items: center; justify-content: center; flex: none; color: #757575; }
.home { width: 78px; }
.home svg { margin: 6px 0 0 6px; }
.doc { width: 698px; box-sizing: border-box; padding: 0 13px 0 10px; }
.doc-label { flex: 1; display: flex; gap: 9px; justify-content: center; align-items: center; font-size: 24px; line-height: 30px; color: #666; padding-top: 4px; }
.doc-label span { padding-bottom: 1px; }
.doc .close { color: #757575; }
.doc.active { background: #f1f1f1; }
.doc.active .doc-label { color: #333; }
.add { width: 56px; }
.add svg { margin-left: 3px; }
.status { height: 62px; display: flex; align-items: center; gap: 34px; padding-left: 16px; }
.status > * { position: relative; top: -1px; }
.avatar { width: 50px; height: 50px; border-radius: 50%; background: #efefef; font-size: 24px; line-height: 49px; text-align: center; margin-left: 7px; color: #333; }
.ribbon { height: 170px; display: flex; background: #f1f1f1; flex: none; }
.design { width: 220px; height: 122px; margin: 21px 0 0 23px; border: 2px solid #c9c9c9; border-radius: 8px; background: transparent; font: 600 22px "Noto Sans", sans-serif; color: #333; display: flex; align-items: center; justify-content: center; gap: 9px; padding: 0 0 3px; flex: none; box-sizing: border-box; }
.design i, .label i { width: 0; height: 0; border: 6px solid transparent; border-top: 8px solid #333; border-bottom: 0; }
.ribbon-main { flex: 1; margin-left: 15px; }
.ribbon-tabs { display: flex; padding-left: 19px; height: 47px; font-size: 22px; }
.ribbon-tabs span { text-align: center; line-height: 43px; box-sizing: border-box; height: 47px; border-bottom: 6px solid transparent; flex: none; white-space: nowrap; }
.ribbon-tabs .on { color: #0696d7; font-weight: 600; border-color: #0696d7; }
.groups { display: flex; height: 123px; }
.group { box-sizing: border-box; height: 102px; margin-top: 6px; border-right: 2px solid #cacaca; flex: none; display: flex; flex-direction: column; align-items: center; }
.group.select { border: 0; }
.icons { display: flex; gap: 22px; padding-top: 1px; height: 64px; }
.tool { width: 64px; height: 64px; }
.tool.select { width: 76px; height: 76px; margin-top: -6px; }
.label { font-size: 22px; line-height: 30px; height: 30px; margin-top: 9px; display: flex; align-items: center; gap: 5px; letter-spacing: 0.3px; }
.label i { margin-top: -2px; }
.viewport { height: 1402px; position: relative; flex: none; }
.cube-text { font: 700 29px "Open Sans", sans-serif; fill: #94969a; }
.axis { font: 400 31px "Open Sans", sans-serif; stroke-width: .8px; }
.axis.small { font-size: 22px; }
.navbar { position: absolute; left: 1276px; top: 1342px; width: 474px; height: 48px; box-sizing: border-box; background: #f1f1f1; display: flex; align-items: center; padding: 0 0 1px 8px; }
.timeline { height: 100px; box-sizing: border-box; border-top: 4px solid #cacaca; box-shadow: inset 0 2px #dfdfdf; background: #f1f1f1; display: flex; flex: none; align-items: flex-start; padding: 0 28px 0 22px; }
.player { width: 222px; display: flex; justify-content: space-between; height: 98px; align-items: center; }
.history { margin-left: 46px; padding-top: 32px; flex: 1; display: flex; position: relative; }
.feature { width: 48px; height: 52px; position: relative; flex: none; border-bottom: 4px solid #cacaca; box-sizing: border-box; }
.feature svg { margin-left: 2.5px; }
.feature i { position: absolute; left: 16px; top: 38px; width: 4px; height: 12px; background: #cacaca; }
.feature:nth-child(1) { border: 0; }
.feature:nth-child(1) i { left: 18px; }
.feature:nth-child(1)::after { content: ""; position: absolute; left: 18px; top: 48px; width: 30px; height: 4px; background: #cacaca; }
.feature:nth-child(17) { border: 0; width: 48px; }
.feature:nth-child(17)::after { content: ""; position: absolute; left: 0; top: 48px; width: 20px; height: 4px; background: #cacaca; }
.marker { position: absolute; left: 798px; top: 20px; }
.gear { margin-top: 34px; }
</style>
